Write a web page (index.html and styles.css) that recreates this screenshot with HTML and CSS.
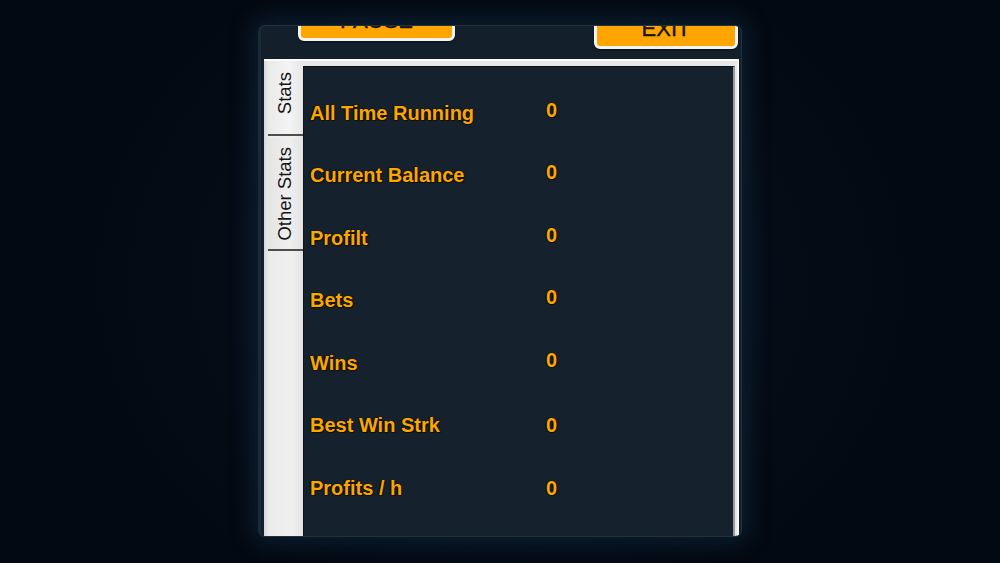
FILE: index.html
```html
<!DOCTYPE html>
<html>
<head>
<meta charset="utf-8">
<link rel="stylesheet" href="styles.css">
</head>
<body>
<div class="window">
  <div class="toolbar">
    <div class="btn btn-pause">PAUSE</div>
    <div class="btn btn-exit">EXIT</div>
  </div>
  <div class="tabctl">
    <div class="tabstrip">
      <div class="tab tab-active"><span class="tab-label">Stats</span></div>
      <div class="tab tab-other"><span class="tab-label">Other Stats</span></div>
    </div>
    <div class="panel">
      <div class="stats">
        <div class="label">All Time Running</div><div class="value hi">0</div>
        <div class="label">Current Balance</div><div class="value hi">0</div>
        <div class="label">Profilt</div><div class="value hi">0</div>
        <div class="label">Bets</div><div class="value hi">0</div>
        <div class="label">Wins</div><div class="value hi">0</div>
        <div class="label">Best Win Strk</div><div class="value">0</div>
        <div class="label">Profits / h</div><div class="value">0</div>
      </div>
    </div>
  </div>
</div>
</body>
</html>
```

FILE: styles.css
```css
* { box-sizing: border-box; }
html, body { margin: 0; padding: 0; }
body {
  width: 1000px;
  height: 563px;
  overflow: hidden;
  background: radial-gradient(ellipse 420px 360px at 50% 50%, #081624 0%, #040c16 70%, #030912 100%);
  padding-top: 25px;
}
.window {
  width: 484px;
  height: 512px;
  margin: 0 auto;
  background: #13202b;
  border: 1px solid #22313e;
  border-left: 3px solid #1b2a37;
  border-radius: 7px;
  overflow: hidden;
  display: flex;
  flex-direction: column;
  box-shadow: 0 0 22px 6px rgba(28, 66, 96, 0.35);
}
.toolbar {
  height: 33px;
  flex: none;
  display: flex;
  align-items: flex-start;
  padding-left: 37px;
}
.btn {
  height: 40px;
  background: #ffa500;
  border: 3px solid #f3f3f3;
  border-radius: 6px;
  display: flex;
  align-items: center;
  justify-content: center;
  font-family: "Liberation Sans", Arial, sans-serif;
  font-size: 22px;
  color: #161310;
  -webkit-text-stroke: 0.4px #161310;
  box-shadow: 0 1px 2px rgba(0,0,0,0.5);
}
.btn-pause {
  width: 157px;
  margin-top: -25px;
}
.btn-exit {
  width: 144px;
  margin-top: -17px;
  margin-left: 139px;
}
.tabctl {
  flex: 1;
  margin-left: 3px;
  margin-right: 2px;
  display: flex;
  background: #e7e7e7;
  border-top: 2px solid #fbfbfb;
  border-right: 2px solid #f7f7f7;
}
.tabstrip {
  width: 39px;
  flex: none;
  padding-top: 1px;
  background: linear-gradient(to right, #d6d6d6 0px, #ececec 5px, #efefef 30px, #e2e2e2 39px);
}
.tab {
  display: flex;
  align-items: center;
  justify-content: center;
  border-bottom: 2px solid #4e4e4e;
  font-family: "Liberation Sans", Arial, sans-serif;
  font-size: 18.5px;
  color: #151515;
}
.tab-active {
  height: 74px;
  padding-bottom: 10px;
  margin-left: 4px;
  background: linear-gradient(to right, #e9e9e9, #f4f4f4 60%, #e6e6e6);
}
.tab-other {
  height: 113px;
  margin-left: 4px;
  margin-top: 2px;
  background: linear-gradient(to right, #e4e4e4, #efefef 60%, #e3e3e3);
}
.tab-label {
  writing-mode: vertical-rl;
  transform: rotate(180deg);
  white-space: nowrap;
  line-height: 1;
}
.panel {
  flex: 1;
  margin-top: 5px;
  margin-right: 2px;
  background: #15222e;
  border: 1px solid #0b131b;
  border-bottom: none;
  border-right: 2px solid #9a9a9a;
}
.stats {
  display: grid;
  grid-template-columns: 236px auto;
  grid-auto-rows: 62.5px;
  align-items: center;
  padding-top: 15px;
  padding-left: 6px;
}
.label, .value {
  font-family: "Liberation Sans", Arial, sans-serif;
  font-weight: bold;
  font-size: 20px;
  color: #f8a800;
  text-shadow: 0 0 1px #000, 1px 1px 1px #1a0f00, -1px 0 1px #1a0f00;
  white-space: nowrap;
}
.value.hi {
  margin-bottom: 6px;
}
```
